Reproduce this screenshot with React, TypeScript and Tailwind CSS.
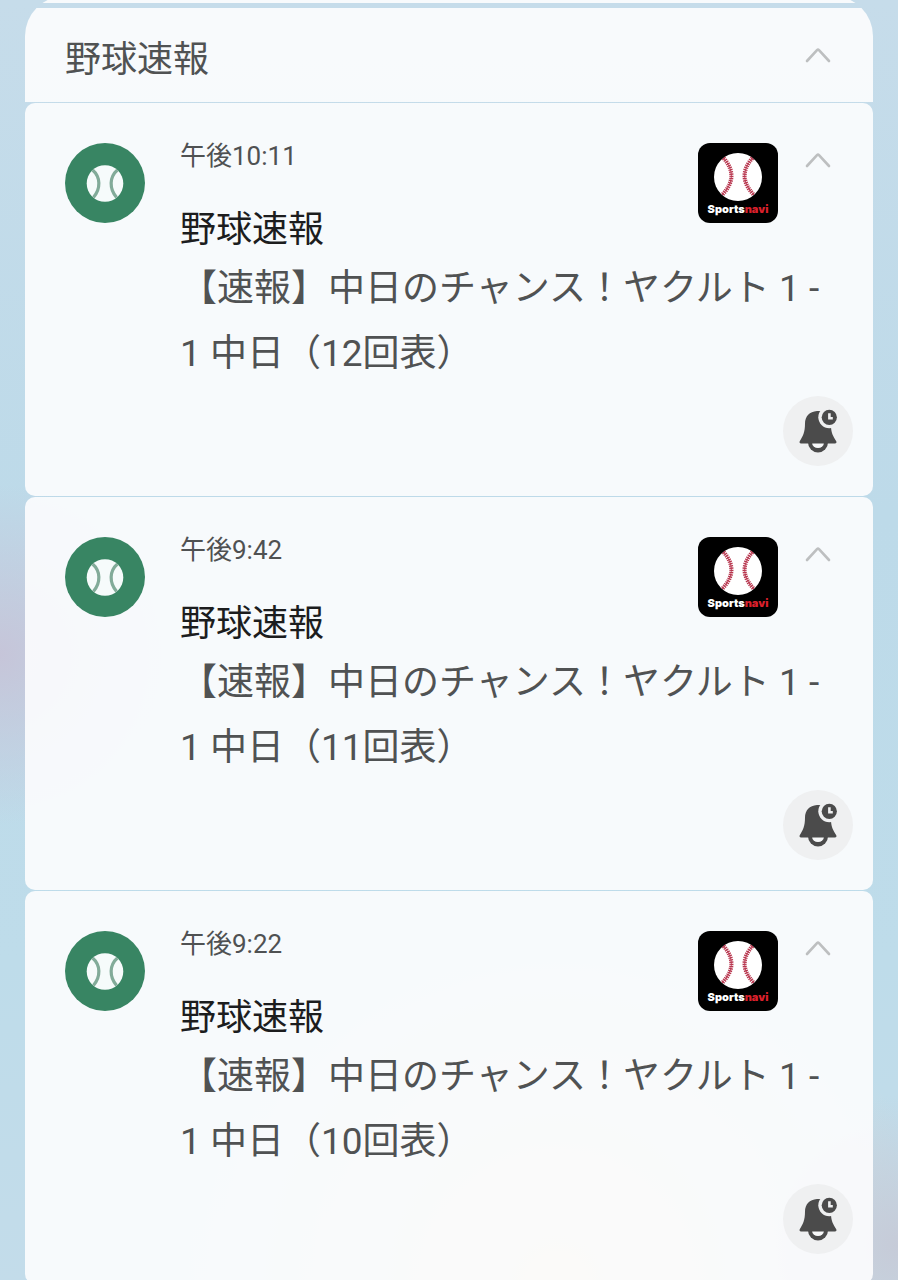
import { useState } from 'react'

const notifications = [
  { id: 1, time: '午後10:11', body: '【速報】中日のチャンス！ヤクルト 1 - 1 中日（12回表）' },
  { id: 2, time: '午後9:42', body: '【速報】中日のチャンス！ヤクルト 1 - 1 中日（11回表）' },
  { id: 3, time: '午後9:22', body: '【速報】中日のチャンス！ヤクルト 1 - 1 中日（10回表）' },
]

function Chevron() {
  return (
    <svg viewBox="0 0 26 16" className="h-4 w-[26px]" fill="none" stroke="#bdbfc0" strokeWidth="2.6" strokeLinecap="round">
      <path d="M2 14 12 3.2Q13 2.2 14 3.2L24 14" />
    </svg>
  )
}

function BallIcon() {
  return (
    <svg viewBox="0 0 80 80" className="size-20 shrink-0" aria-hidden="true">
      <circle cx="40" cy="40" r="40" fill="#388563" />
      <circle cx="40" cy="40.5" r="18.3" fill="#f6fbfb" />
      <g fill="none" stroke="#82ab99" strokeWidth="3.2">
        <path d="M27.6 27C35.6 34 36 45.5 28.4 54.5" />
        <path d="M52.4 27C44.4 34 44 45.5 51.6 54.5" />
      </g>
    </svg>
  )
}

function SportsnaviLogo() {
  return (
    <div className="flex size-20 shrink-0 flex-col items-center rounded-xl bg-black pt-[10px]">
      <svg viewBox="0 0 48 48" className="size-12" aria-hidden="true">
        <circle cx="24" cy="24" r="24" fill="#fff" />
        <g fill="none" stroke="#b8374f">
          <path d="M9.5 5Q26 23.5 8 42" strokeWidth="4.2" strokeDasharray="1.3 0.9" />
          <path d="M38.5 5Q22 23.5 40 42" strokeWidth="4.2" strokeDasharray="1.3 0.9" />
          <path d="M9.5 5Q26 23.5 8 42M38.5 5Q22 23.5 40 42" strokeWidth="0.9" />
        </g>
      </svg>
      <span className="font-[Inter,sans-serif] text-[11px] leading-4 font-black text-white">
        Sports<span className="text-[#d9202c]">navi</span>
      </span>
    </div>
  )
}

function SnoozeIcon() {
  return (
    <svg viewBox="0 0 70 70" className="size-[70px]" aria-hidden="true">
      <circle cx="35" cy="46.5" r="10" fill="#4b4b4b" />
      <path d="M29 46.5h12a6 5.5 0 0 1-12 0z" fill="#f7f8f9" />
      <path
        d="M34 15C26.5 15.5 22 20.5 22 27.5C22 36 20 40 16.6 45.6Q16 47.5 18 47.5H52Q54 47.5 53.4 45.6C50 40 48.3 37 48 31V15z"
        fill="#4b4b4b"
      />
      <circle cx="46.3" cy="21.3" r="11" fill="#eff0f1" />
      <circle cx="46.3" cy="21.3" r="7.6" fill="#4b4b4b" />
      <path d="M46.4 17.2V22.2H49.8" fill="none" stroke="#eff0f1" strokeWidth="2.6" />
    </svg>
  )
}

function NotificationCard({ time, body }: { time: string; body: string }) {
  const [open, setOpen] = useState(true)
  return (
    <article className="flex items-start gap-[35px] rounded-[10px] bg-[#fdfdfe]/90 pt-10 pr-5 pb-[30px] pl-10">
      <BallIcon />
      <div className="min-w-0 flex-1">
        <div className="mr-[22px] flex justify-between">
          <div>
            <time className="block text-[26px] leading-[26px] text-[#4f5152]">{time}</time>
            <h2 className="mt-9 text-[36px] leading-[51px] text-[#1c1d1e]">野球速報</h2>
          </div>
          <div className="flex items-start gap-[27px]">
            <SportsnaviLogo />
            <button type="button" aria-label="折りたたむ" aria-expanded={open} onClick={() => setOpen(!open)} className="pt-[9px]">
              <Chevron />
            </button>
          </div>
        </div>
        {open && (
          <>
            <p className="mr-6 text-[37px] leading-[65px] text-[#505253]">{body}</p>
            <div className="mt-[10px] flex justify-end">
              <button type="button" aria-label="スヌーズ" className="rounded-full bg-[#eff0f1]">
                <SnoozeIcon />
              </button>
            </div>
          </>
        )}
      </div>
    </article>
  )
}

export default function App() {
  return (
    <div
      lang="ja"
      className="flex min-h-screen flex-col overflow-hidden bg-[radial-gradient(circle_at_0%_51%,#c6c5d9_0,transparent_170px),radial-gradient(circle_at_100%_97%,#c6cbd8_0,transparent_150px),radial-gradient(circle_at_62%_100%,#e6dccb_0,transparent_380px),linear-gradient(to_bottom,#c6dcea,#bddae9_40%,#bedcea_75%,#c3dcea)] bg-[#c0dbe9] px-[25px] font-[Roboto,'Noto_Sans_CJK_JP',sans-serif] font-normal"
    >
      <main className="-mt-1 flex flex-col gap-px">
        <div className="flex flex-col gap-[5px] overflow-hidden rounded-t-[40px]">
          <div className="h-[7px] bg-[#fdfdfe]/90" />
          <header className="flex items-start justify-between bg-[#fdfdfe]/90 pt-[27px] pr-[42px] pb-[17px] pl-10">
            <h1 className="text-[36px] leading-[50px] text-[#505253]">野球速報</h1>
            <button type="button" aria-label="グループを折りたたむ" className="pt-3">
              <Chevron />
            </button>
          </header>
        </div>
        {notifications.map((item) => (
          <NotificationCard key={item.id} time={item.time} body={item.body} />
        ))}
      </main>
    </div>
  )
}
